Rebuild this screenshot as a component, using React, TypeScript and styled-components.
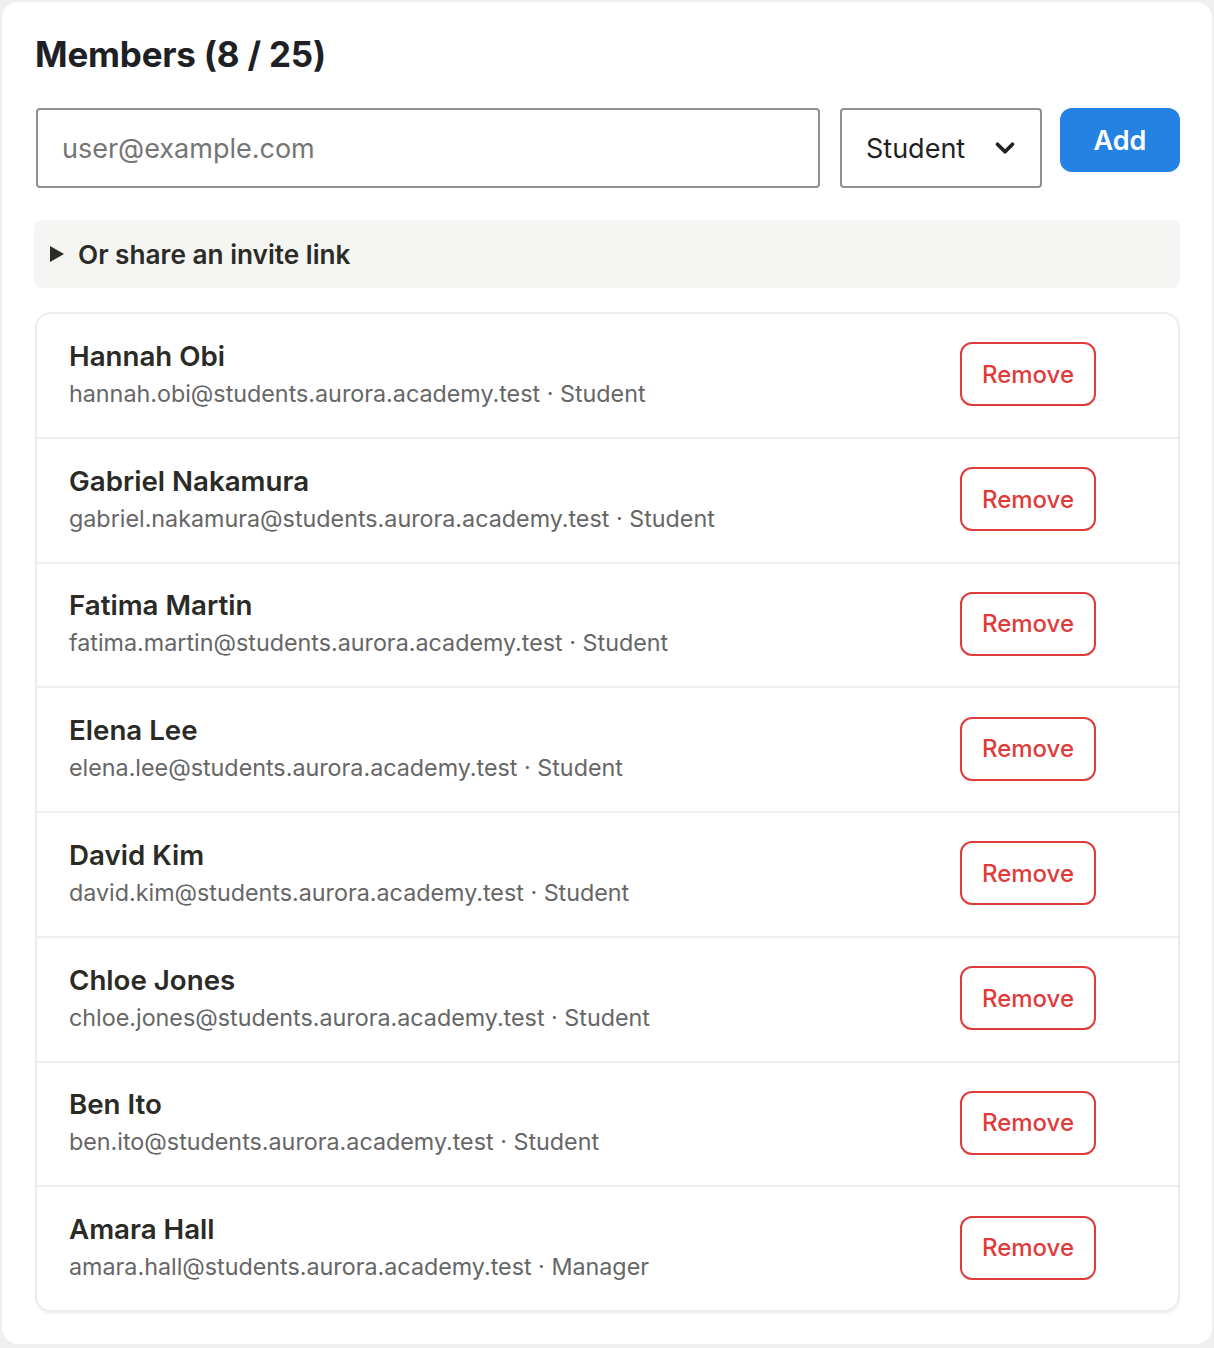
import styled, { createGlobalStyle } from "styled-components";
import { FiChevronDown } from "react-icons/fi";

const GlobalStyle = createGlobalStyle`
  html, body {
    margin: 0;
    padding: 0;
    background: #efefef;
    font-family: Inter, "Noto Sans", sans-serif;
  }
  * { box-sizing: border-box; }
`;

const Page = styled.div`
  padding: 2px 2px 4px 2px;
`;

const Card = styled.section`
  background: #fff;
  border-radius: 16px;
  padding: 30px 32px 32px 32px;
  min-height: 1342px;
`;

const Title = styled.h2`
  margin: 0 0 0 1px;
  font-size: 35px;
  font-weight: 700;
  color: #1d2125;
  letter-spacing: -0.2px;
  line-height: 44px;
`;

const AddRow = styled.div`
  display: flex;
  align-items: flex-start;
  gap: 20px;
  margin-top: 32px;
  padding-left: 2px;
`;

const EmailInput = styled.input`
  flex: 1;
  height: 80px;
  border: 2px solid #8f8f8f;
  border-radius: 4px;
  padding: 0 24px;
  font-family: inherit;
  font-size: 27px;
  color: #222;
  outline: none;
  &::placeholder {
    color: #757575;
  }
`;

const RoleSelect = styled.div`
  width: 202px;
  height: 80px;
  border: 2px solid #8f8f8f;
  border-radius: 4px;
  display: flex;
  align-items: center;
  justify-content: space-between;
  padding: 0 20px 0 24px;
  font-size: 27px;
  color: #1f1f1f;
`;

const AddButton = styled.button`
  width: 120px;
  height: 64px;
  margin-left: -2px;
  border: none;
  border-radius: 12px;
  background: #2483e2;
  color: #fff;
  font-family: inherit;
  font-size: 27px;
  font-weight: 600;
  cursor: pointer;
`;

const InviteToggle = styled.div`
  margin-top: 32px;
  height: 68px;
  background: #f5f5f4;
  border-radius: 8px;
  display: flex;
  align-items: center;
  gap: 14px;
  padding-left: 16px;
  font-size: 26.2px;
  font-weight: 600;
  color: #2b2b28;
`;

const Triangle = styled.span`
  width: 0;
  height: 0;
  border-top: 8px solid transparent;
  border-bottom: 8px solid transparent;
  border-left: 14px solid #2b2b28;
`;

const MemberList = styled.ul`
  list-style: none;
  margin: 24px 0 0 1px;
  padding: 0;
  border: 2px solid #ececec;
  border-radius: 16px;
  box-shadow: 0 2px 2px rgba(0, 0, 0, 0.05);
`;

const MemberRow = styled.li`
  box-sizing: content-box;
  display: flex;
  align-items: center;
  justify-content: space-between;
  height: 122.75px;
  padding: 0 82px 0 32px;
  & + & {
    border-top: 2px solid #efefef;
  }
`;

const MemberInfo = styled.div`
  display: flex;
  flex-direction: column;
  gap: 5px;
  margin-top: -2px;
`;

const MemberName = styled.div`
  font-size: 27.7px;
  font-weight: 600;
  color: #2a2a27;
  line-height: 34px;
`;

const MemberMeta = styled.div`
  font-size: 23.3px;
  color: #666;
  line-height: 32px;
`;

const RemoveButton = styled.button`
  width: 136px;
  height: 64px;
  margin-top: -2px;
  border: 2px solid #df3b3b;
  border-radius: 12px;
  background: #fff;
  color: #df3b3b;
  font-family: inherit;
  font-size: 24px;
  font-weight: 500;
  cursor: pointer;
`;

const members = [
  { name: "Hannah Obi", email: "hannah.obi@students.aurora.academy.test", role: "Student" },
  { name: "Gabriel Nakamura", email: "gabriel.nakamura@students.aurora.academy.test", role: "Student" },
  { name: "Fatima Martin", email: "fatima.martin@students.aurora.academy.test", role: "Student" },
  { name: "Elena Lee", email: "elena.lee@students.aurora.academy.test", role: "Student" },
  { name: "David Kim", email: "david.kim@students.aurora.academy.test", role: "Student" },
  { name: "Chloe Jones", email: "chloe.jones@students.aurora.academy.test", role: "Student" },
  { name: "Ben Ito", email: "ben.ito@students.aurora.academy.test", role: "Student" },
  { name: "Amara Hall", email: "amara.hall@students.aurora.academy.test", role: "Manager" },
];

const App = () => (
  <Page>
    <GlobalStyle />
    <Card>
      <Title>Members (8 / 25)</Title>

      <AddRow>
        <EmailInput placeholder="user@example.com" />
        <RoleSelect>
          Student
          <FiChevronDown size={30} strokeWidth={3} color="#222" />
        </RoleSelect>
        <AddButton>Add</AddButton>
      </AddRow>

      <InviteToggle>
        <Triangle />
        Or share an invite link
      </InviteToggle>

      <MemberList>
        {members.map((m) => (
          <MemberRow key={m.email}>
            <MemberInfo>
              <MemberName>{m.name}</MemberName>
              <MemberMeta>
                {m.email} · {m.role}
              </MemberMeta>
            </MemberInfo>
            <RemoveButton>Remove</RemoveButton>
          </MemberRow>
        ))}
      </MemberList>
    </Card>
  </Page>
);

export default App;
